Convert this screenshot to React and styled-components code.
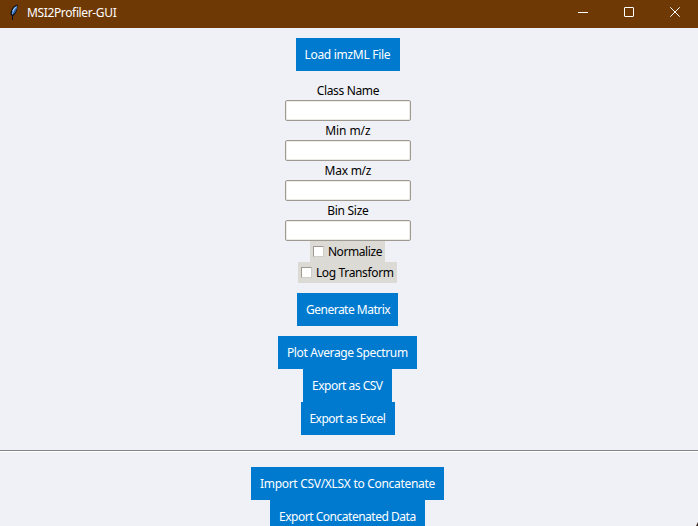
import React from "react";
import styled, { createGlobalStyle } from "styled-components";

const GlobalStyle = createGlobalStyle`
  * { box-sizing: border-box; }
  body {
    margin: 0;
    overflow: hidden;
    background: #f0f1f6;
    font: 12px/16px "Noto Sans", "Open Sans", sans-serif;
    color: #000;
  }
`;

const Window = styled.div`
  position: relative;
  height: 526px;
  overflow: hidden;
  background: #f0f1f6;
`;

const TitleBar = styled.header`
  display: flex;
  align-items: center;
  height: 28px;
  background: #6f3905;
  color: #fff;
`;

const AppIcon = styled.svg`
  width: 10px;
  height: 18px;
  margin: 0 8px 4px 9px;
`;

const Title = styled.h1`
  flex: 1;
  margin: 0;
  padding-bottom: 2px;
  font: inherit;
`;

const WindowButton = styled.button`
  display: flex;
  width: 46px;
  height: 28px;
  padding: 7px 18px 11px;
  border: 0;
  background: none;
  color: #fff;
`;

const Glyph = styled.svg`
  flex: none;
  width: 10px;
  height: 10px;
  fill: none;
  stroke: currentColor;
`;

const Section = styled.section`
  display: flex;
  flex-direction: column;
  align-items: center;
  width: 695.8px;
  padding-top: ${(p) => p.$top}px;
`;

const Text = styled.span`
  display: inline-block;
  white-space: nowrap;
  letter-spacing: ${(p) => p.$track || 0}px;
`;

const Button = styled.button`
  display: flex;
  align-items: center;
  flex: none;
  width: ${(p) => p.$width}px;
  height: 33px;
  margin-bottom: ${(p) => p.$gap || 0}px;
  padding: 0 0 0 8.6px;
  border: 0;
  background: #007acf;
  color: #fff;
  font: inherit;
`;

const Field = styled.label`
  display: flex;
  flex-direction: column;
  align-items: center;
  height: 40px;
  line-height: 19px;
`;

const Entry = styled.input`
  width: 126px;
  height: 21px;
  margin: 0;
  padding: 0 3px;
  border: 1px solid #9e9a91;
  border-radius: 2px;
  background: #fff;
  box-shadow: inset 0 0 0 1px #eeebe7;
  font: inherit;
  outline: 0;
`;

const Check = styled.label`
  display: flex;
  align-items: center;
  width: ${(p) => p.$width}px;
  height: 21px;
  padding-left: 3px;
  background: #dcdad5;
`;

const Box = styled.input`
  appearance: none;
  width: 11px;
  height: 11px;
  margin: 0 3.500px 0 0;
  border: 1px solid;
  border-color: #9e9a91 #cfcdc8 #cfcdc8 #9e9a91;
  background: #fff;
`;

const Separator = styled.hr`
  height: 2px;
  margin: 15px 0 0;
  border: 0;
  border-top: 1px solid #848284;
  background: #fff;
`;

const Corner = styled.svg`
  position: absolute;
  right: 0;
  bottom: 0;
  width: 2px;
  height: 4px;
`;

const fields = [
  ["Class Name", -0.35],
  ["Min m/z", -0.1],
  ["Max m/z", -0.25],
  ["Bin Size", -0.3],
];

const actions = [
  ["Generate Matrix", 101, 10, -0.5],
  ["Plot Average Spectrum", 139, 0, -0.38],
  ["Export as CSV", 89, 0, -0.5],
  ["Export as Excel", 94, 0, -0.55],
];

const Action = ({ label, width, gap, track }) => (
  <Button $width={width} $gap={gap}>
    <Text $track={track}>{label}</Text>
  </Button>
);

export default function App() {
  return (
    <Window>
      <GlobalStyle />
      <TitleBar>
        <AppIcon viewBox="0 0 10 18">
          <path d="M8.500 1.500C4.500 2.500 1.500 6.500 1.500 11.500l1.500 1.500v4h1v-4c3-2 4.500-5.500 4.500-11.500z" fill="#0a0d14" />
          <path d="M8 2.500C5 4 3 7 2.700 11l1 .8C6.500 9.500 8 6.500 8 2.500z" fill="#5c9cf0" />
          <path d="M6.500 4 3.500 8" stroke="#b8d8ff" strokeWidth=".9" />
          <path d="M7 5.500 3.800 12" stroke="#1c335a" strokeWidth=".7" />
        </AppIcon>
        <Title><Text $track={-0.36}>MSI2Profiler-GUI</Text></Title>
        <WindowButton aria-label="Minimize">
          <Glyph viewBox="0 0 10 10"><path d="M0 5.500H10" /></Glyph>
        </WindowButton>
        <WindowButton aria-label="Maximize">
          <Glyph viewBox="0 0 10 10"><rect x=".5" y=".5" width="9" height="9" rx=".4" /></Glyph>
        </WindowButton>
        <WindowButton aria-label="Close">
          <Glyph viewBox="0 0 10 10"><path d="M.3.3 9.700 9.700M9.700.3.3 9.700" /></Glyph>
        </WindowButton>
      </TitleBar>
      <Section $top={10}>
        <Action label="Load imzML File" width={104} gap={10} track={-0.3} />
        {fields.map(([label, track]) => (
          <Field key={label}>
            <Text $track={track}>{label}</Text>
            <Entry />
          </Field>
        ))}
        <Check $width={75}><Box type="checkbox" /><Text $track={-0.42}>Normalize</Text></Check>
        <Check $width={99}><Box type="checkbox" /><Text $track={-0.35}>Log Transform</Text></Check>
      </Section>
      <Section $top={10}>
        {actions.map(([label, width, gap, track]) => (
          <Action key={label} label={label} width={width} gap={gap} track={track} />
        ))}
      </Section>
      <Separator />
      <Section $top={15}>
        <Action label="Import CSV/XLSX to Concatenate" width={193} track={-0.3} />
        <Action label="Export Concatenated Data" width={155} track={-0.48} />
      </Section>
      <Corner viewBox="0 0 2 4">
        <path d="M2 0V4H0z" fill="#35271f" />
      </Corner>
    </Window>
  );
}
